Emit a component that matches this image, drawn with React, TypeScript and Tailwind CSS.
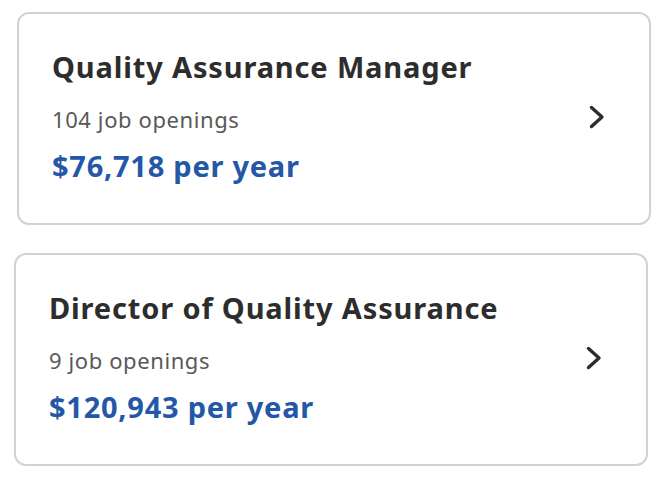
import React from "react";

interface JobCardProps {
  title: string;
  openings: string;
  salary: string;
  className?: string;
}

function Chevron() {
  return (
    <svg
      width="16"
      height="24"
      viewBox="0 0 16 24"
      fill="none"
      stroke="#2d2d2d"
      strokeWidth="3.4"
      strokeLinecap="round"
      strokeLinejoin="round"
      className="shrink-0"
    >
      <polyline points="2.5,2.5 13,12 2.5,21.5" />
    </svg>
  );
}

function JobCard({ title, openings, salary, className }: JobCardProps) {
  return (
    <div
      className={
        "w-[634px] flex items-center border-2 border-[#d4d2d0] rounded-[12px] bg-white pl-[33px] pr-[44px] pt-[35px] pb-[39px] " +
        (className ?? "")
      }
    >
      <div className="flex-1 min-w-0">
        <div className="text-[29px] leading-[36px] font-bold tracking-[0.85px] text-[#2d2d2d]">
          {title}
        </div>
        <div className="mt-[20px] text-[22px] leading-[28px] tracking-[0.6px] text-[#595959]">
          {openings}
        </div>
        <div className="mt-[15px] text-[29px] leading-[36px] font-bold tracking-[0.75px] text-[#2557a7]">
          {salary}
        </div>
      </div>
      <Chevron />
    </div>
  );
}

export default function App() {
  return (
    <div
      className="w-[661px] h-[484px] bg-white overflow-hidden pt-[12px]"
      style={{ fontFamily: '"Noto Sans", "Open Sans", sans-serif' }}
    >
      <JobCard
        className="ml-[17px]"
        title="Quality Assurance Manager"
        openings="104 job openings"
        salary="$76,718 per year"
      />
      <JobCard
        className="ml-[14px] mt-[28px]"
        title="Director of Quality Assurance"
        openings="9 job openings"
        salary="$120,943 per year"
      />
    </div>
  );
}
